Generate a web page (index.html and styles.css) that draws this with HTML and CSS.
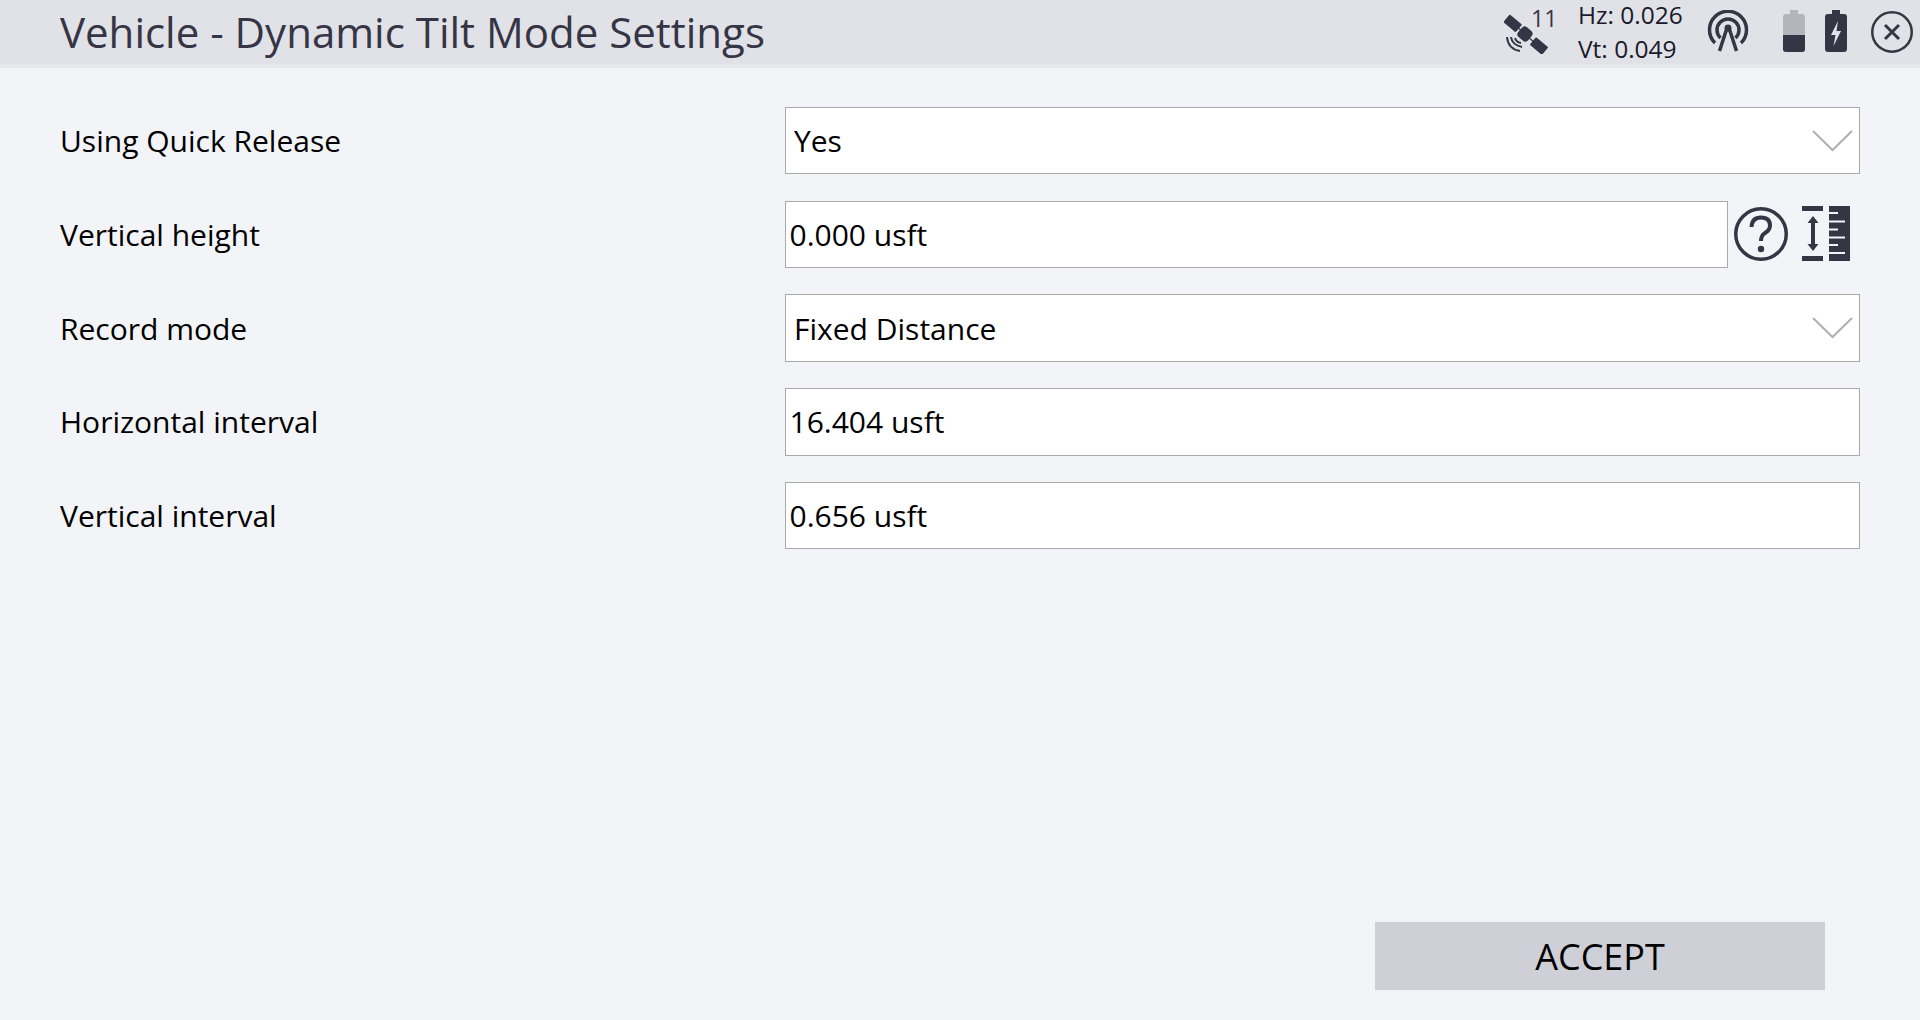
FILE: index.html
```html
<!DOCTYPE html>
<html lang="en">
    <head>
        <meta charset="UTF-8">
        <title>Vehicle - Dynamic Tilt Mode Settings</title>
        <link rel="stylesheet" href="styles.css">
    </head>
    <body>
        <div class="container">
            <!-- Title bar -->
            <div class="top-bar">
                <h1 class="title">Vehicle - Dynamic Tilt Mode Settings</h1>
                <div class="status">
                    <svg class="icon-sat" viewBox="0 0 44 44" width="44" height="44">
                        <g fill="#353545">
                            <rect x="0.700" y="8.300" width="16" height="10" rx="1" transform="rotate(40 8.700 13.300)"/>
                            <rect x="14.500" y="17.500" width="13" height="13" rx="4" transform="rotate(40 21 24)"/>
                            <rect x="27" y="31" width="16" height="10" rx="1" transform="rotate(40 35 36)"/>
                        </g>
                        <path d="M11 15 L32 34" stroke="#353545" stroke-width="1.200" fill="none"/>
                        <g fill="none" stroke="#353545" stroke-width="2">
                            <path d="M11 28 Q12 32 17 33"/>
                            <path d="M7 27 Q8 35 18 37"/>
                            <path d="M3 27 Q4 39 16 41"/>
                        </g>
                    </svg>
                    <span class="sat-count">11</span>
                    <div class="precision">
                        <span>Hz: 0.026</span>
                        <span>Vt: 0.049</span>
                    </div>
                    <svg class="icon-signal" viewBox="0 0 44 44" width="44" height="44">
                        <g fill="none" stroke="#353545" stroke-width="3.500">
                            <path d="M9 33 A18.500 18.500 0 1 1 35 33"/>
                            <path d="M14.500 28 A11 11 0 1 1 29.500 28"/>
                        </g>
                        <path d="M13.500 41 L21 18 H23 L30.500 41" fill="none" stroke="#353545" stroke-width="3.500"/>
                        <circle cx="22" cy="18" r="3.500" fill="#353545"/>
                    </svg>
                    <svg class="icon-battery" viewBox="0 0 22 42" width="22" height="42">
                        <path d="M7 0 H15 V4 H19 Q22 4 22 7 V39 Q22 42 19 42 H3 Q0 42 0 39 V7 Q0 4 3 4 H7 Z" fill="#b4b4bc"/>
                        <path d="M0 25 H22 V39 Q22 42 19 42 H3 Q0 42 0 39 Z" fill="#353545"/>
                    </svg>
                    <svg class="icon-charge" viewBox="0 0 22 42" width="22" height="42">
                        <path d="M7 0 H15 V4 H19 Q22 4 22 7 V39 Q22 42 19 42 H3 Q0 42 0 39 V7 Q0 4 3 4 H7 Z" fill="#353545"/>
                        <path d="M13 11 L6 25 H10.500 L8.500 36 L16 21 H11.500 Z" fill="#e1e2e7"/>
                    </svg>
                    <svg class="icon-close" viewBox="0 0 44 44" width="44" height="44">
                        <circle cx="22" cy="22" r="19.750" fill="none" stroke="#353545" stroke-width="2.500"/>
                        <path d="M15 15 L29 29 M29 15 L15 29" stroke="#353545" stroke-width="3" fill="none"/>
                    </svg>
                </div>
            </div>

            <!-- Settings form -->
            <div class="form">
                <div class="row">
                    <label class="row-label">Using Quick Release</label>
                    <div class="field select">
                        <span>Yes</span>
                        <svg class="chevron" viewBox="0 0 42 22" width="42" height="22"><path d="M1 1 L20.500 20 L40 1" fill="none" stroke="#b0b0b0" stroke-width="2"/></svg>
                    </div>
                </div>
                <div class="row">
                    <label class="row-label">Vertical height</label>
                    <div class="field">0.000 usft</div>
                    <div class="field-tools">
                        <svg viewBox="0 0 56 56" width="56" height="56">
                            <circle cx="28" cy="28" r="25.250" fill="none" stroke="#353545" stroke-width="3.500"/>
                            <path d="M18.500 21 Q19 11.500 28 11.500 Q37 11.500 37 19.500 Q37 24 32 27 Q28 29.500 28 35" fill="none" stroke="#353545" stroke-width="4"/>
                            <circle cx="28" cy="43" r="3.200" fill="#353545"/>
                        </svg>
                        <svg viewBox="0 0 48 56" width="48" height="56">
                            <path d="M0 0 H21 V5 H0 Z M0 50 H21 V55 H0 Z" fill="#353545"/>
                            <path d="M11 10 L16.500 17 H13 V38 H16.500 L11 45 L5.500 38 H9 V17 H5.500 Z" fill="#353545"/>
                            <rect x="27" y="0" width="21" height="55" fill="#353545"/>
                            <path d="M27 7 H36 M27 15.500 H43 M27 23.500 H36 M27 31.500 H43 M27 39 H36 M27 47 H43" stroke="#f3f4f8" stroke-width="2" fill="none"/>
                        </svg>
                    </div>
                </div>
                <div class="row">
                    <label class="row-label">Record mode</label>
                    <div class="field select">
                        <span>Fixed Distance</span>
                        <svg class="chevron" viewBox="0 0 42 22" width="42" height="22"><path d="M1 1 L20.500 20 L40 1" fill="none" stroke="#b0b0b0" stroke-width="2"/></svg>
                    </div>
                </div>
                <div class="row">
                    <label class="row-label">Horizontal interval</label>
                    <div class="field">16.404 usft</div>
                </div>
                <div class="row">
                    <label class="row-label">Vertical interval</label>
                    <div class="field">0.656 usft</div>
                </div>
            </div>

            <!-- Bottom action -->
            <div class="actions">
                <button class="accept-button">ACCEPT</button>
            </div>
        </div>
    </body>
</html>
```

FILE: styles.css
```css
/* Global */
body, html {
    margin: 0;
    padding: 0;
    height: 100%;
    background-color: #f3f4f8;
    color: #000000;
    font-family: 'Open Sans', sans-serif;
    overflow: hidden;
}

.container {
    display: flex;
    flex-direction: column;
    height: 100vh;
}

/* Title bar */
.top-bar {
    display: flex;
    align-items: center;
    justify-content: space-between;
    height: 64px;
    padding-left: 60px;
    background-color: #e1e2e7;
    border-bottom: 4px solid #e6e7eb;
    flex-shrink: 0;
}

.title {
    margin: 0 0 2px 0;
    font-size: 42px;
    font-weight: 400;
    color: #353545;
}

.status {
    display: flex;
    align-items: center;
    height: 64px;
    padding-right: 6px;
}

.icon-sat {
    flex-shrink: 0;
}

.sat-count {
    font-size: 23px;
    align-self: flex-start;
    margin-top: 2px;
    margin-left: -17px;
    width: 47px;
    color: #353545;
}

.precision {
    display: flex;
    flex-direction: column;
    width: 128px;
    font-size: 24.500px;
    line-height: 34px;
    color: #1a1a2a;
}

.icon-battery {
    margin-left: 33px;
    margin-bottom: 2px;
}

.icon-charge {
    margin-left: 20px;
    margin-bottom: 2px;
}

.icon-close {
    margin-left: 23px;
}

/* Form rows */
.form {
    display: flex;
    flex-direction: column;
    gap: 26.250px;
    padding: 38.750px 60px 0 60px;
}

.row {
    display: flex;
    align-items: center;
}

.row-label {
    width: 725px;
    font-size: 30px;
    flex-shrink: 0;
}

.field {
    flex-grow: 1;
    height: 67.500px;
    box-sizing: border-box;
    display: flex;
    align-items: center;
    padding-left: 3.500px;
    background-color: #ffffff;
    border: 1px solid #a9a9ad;
    font-size: 30px;
}

.select {
    justify-content: space-between;
    padding-left: 8px;
    padding-right: 5px;
}

.field-tools {
    display: flex;
    align-items: center;
    gap: 13px;
    width: 132px;
    padding-left: 5px;
    box-sizing: border-box;
    flex-shrink: 0;
}

/* Bottom action */
.actions {
    margin-top: auto;
    display: flex;
    justify-content: flex-end;
    padding: 0 95px 30px 0;
}

.accept-button {
    width: 450px;
    height: 68px;
    background-color: #cfd0d7;
    border: none;
    color: #000000;
    font-family: 'Open Sans', sans-serif;
    font-size: 36px;
}
```
